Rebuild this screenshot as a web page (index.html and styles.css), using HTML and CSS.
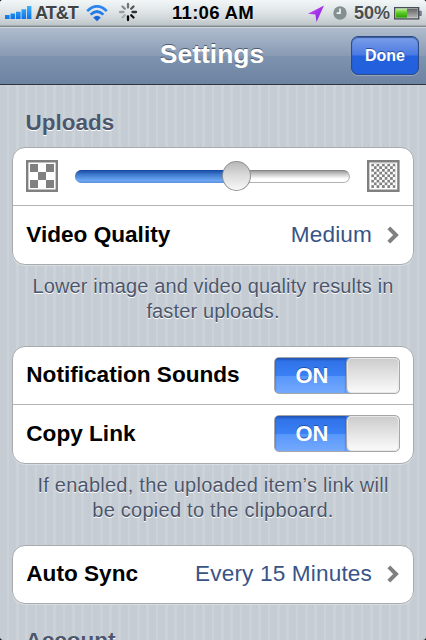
FILE: index.html
```html
<!DOCTYPE html>
<html lang="en">
<head>
<meta charset="utf-8">
<title>Settings</title>
<link rel="stylesheet" href="styles.css">
</head>
<body>
<div class="screen">
  <header class="status">
    <div class="status-left">
      <svg class="signal" width="27" height="14" viewBox="0 0 27 14">
        <defs>
          <linearGradient id="blue" x2="0" y2="1"><stop stop-color="#3db2fb"/><stop offset="1" stop-color="#0a72e8"/></linearGradient>
        </defs>
        <path fill="url(#blue)" d="M0 9h4.6V13H0zM5.5 7.6h4.6V13H5.5zM11 5.8h4.6V13H11zM16.5 3.2h4.6V13h-4.6zM22 0h4.4v13H22z"/>
      </svg>
      <span class="carrier">AT&amp;T</span>
      <svg class="wifi" width="22" height="17" viewBox="0 0 22 17">
        <g fill="none" stroke-width="2.7">
          <path stroke="#2c86ee" d="M1.2 6.1Q11-3.4 20.8 6.1"/>
          <path stroke="#237be9" d="M4.6 9.6Q11 3.3 17.4 9.6"/>
        </g>
        <path fill="#1665dc" d="M7.2 12.4Q11 9.2 14.8 12.4L11 16.2z"/>
      </svg>
      <svg class="spinner" width="20" height="20" viewBox="-10 -10 20 20">
        <g stroke-width="2.3" stroke-linecap="round">
          <path stroke="#707575" d="M0-4.5V-8"/>
          <path stroke="#555" d="M3.2-3.2L5.5-5.5"/>
          <path stroke="#333" d="M4.5 0H8"/>
          <path stroke="#111" d="M3.2 3.2L5.5 5.5"/>
          <path stroke="#000" d="M0 4.5V8"/>
          <path stroke="#a7acac" d="M-3.2 3.2L-5.5 5.5"/>
          <path stroke="#999e9e" d="M-4.5 0H-8"/>
          <path stroke="#858989" d="M-3.2-3.2L-5.5-5.5"/>
        </g>
      </svg>
    </div>
    <span class="time">11:06 AM</span>
    <div class="status-right">
      <svg class="location" width="17" height="17" viewBox="0 0 17 17">
        <defs>
          <linearGradient id="violet" x2="1" y2="1"><stop stop-color="#d04dff"/><stop offset="1" stop-color="#7a1ad6"/></linearGradient>
        </defs>
        <path fill="url(#violet)" d="M16 .5L0 8.8l7.4.7L8.5 17z"/>
      </svg>
      <svg class="alarm" width="14" height="14" viewBox="0 0 14 14">
        <circle cx="7" cy="7" r="6.7" fill="#849090"/>
        <path d="M7 2.5V7.2H3.6" fill="none" stroke="#eef1f2" stroke-width="1.7"/>
      </svg>
      <span class="percent">50%</span>
      <svg class="battery" width="28" height="13" viewBox="0 0 28 13">
        <defs>
          <linearGradient id="green" x2="0" y2="1"><stop stop-color="#bfef94"/><stop offset=".45" stop-color="#58ca20"/><stop offset="1" stop-color="#2c9b09"/></linearGradient>
          <linearGradient id="gray" x2="0" y2="1"><stop stop-color="#666"/><stop offset="1" stop-color="#b5b5b5"/></linearGradient>
        </defs>
        <rect x=".7" y=".7" width="24" height="11.2" fill="#e8ecec" stroke="#404652" stroke-width="1.3"/>
        <path fill="url(#green)" d="M1.8 1.8h11.2v9H1.8z"/>
        <path fill="url(#gray)" d="M13 1.8h10.8v9H13z"/>
        <path fill="#8b91a0" stroke="#505564" stroke-width=".8" d="M25.4 4.2h1.8v4.3h-1.8z"/>
      </svg>
    </div>
  </header>

  <nav class="navbar">
    <h1>Settings</h1>
    <button class="done" type="button">Done</button>
  </nav>

  <main class="content">
    <h2>Uploads</h2>
    <section class="group">
      <div class="row slider-row">
        <svg class="quality" width="32" height="32" viewBox="0 0 32 32">
          <path fill="none" stroke="#808080" stroke-width="2.4" d="M1.2 1.2h29.6v29.6H1.2z"/>
          <path fill="#808080" d="M4 4h8v8H4zM20 4h8v8h-8zM12 12h8v8h-8zM4 20h8v8H4zM20 20h8v8h-8z"/>
        </svg>
        <div class="slider"><div class="fill"></div><div class="knob"></div></div>
        <svg class="quality" width="33" height="32" viewBox="0 0 33 32">
          <defs>
            <pattern id="fine" x="4.2" y="3.6" width="5.4" height="5.4" patternUnits="userSpaceOnUse">
              <path fill="#808080" d="M0 0h2.7v2.7H0zM2.7 2.7h2.7v2.7H2.7z"/>
            </pattern>
          </defs>
          <path fill="none" stroke="#808080" stroke-width="2.4" d="M1.2 1.2h30.2v29.6H1.2z"/>
          <path fill="url(#fine)" d="M4.2 3.6h24.3v24.3H4.2z"/>
        </svg>
      </div>
      <div class="row">
        <span class="label">Video Quality</span>
        <span class="value">Medium</span>
        <svg class="chevron" width="12" height="18" viewBox="0 0 12 18"><path d="M1.8 1.8L9 9l-7.2 7.2" fill="none" stroke="#808080" stroke-width="4"/></svg>
      </div>
    </section>
    <p class="note">Lower image and video quality results in<br>faster uploads.</p>

    <section class="group">
      <div class="row">
        <span class="label">Notification Sounds</span>
        <div class="switch"><span class="on">ON</span><span class="thumb"></span></div>
      </div>
      <div class="row">
        <span class="label">Copy Link</span>
        <div class="switch"><span class="on">ON</span><span class="thumb"></span></div>
      </div>
    </section>
    <p class="note wide">If enabled, the uploaded item’s link will<br>be copied to the clipboard.</p>

    <section class="group">
      <div class="row">
        <span class="label">Auto Sync</span>
        <span class="value">Every 15 Minutes</span>
        <svg class="chevron" width="12" height="18" viewBox="0 0 12 18"><path d="M1.8 1.8L9 9l-7.2 7.2" fill="none" stroke="#808080" stroke-width="4"/></svg>
      </div>
    </section>
    <h2 class="account">Account</h2>
  </main>
</div>
</body>
</html>
```
FILE: styles.css
```css
* { box-sizing: border-box; }

html { background: #000; }

body {
  margin: 0;
  font-family: "Liberation Sans", Arial, sans-serif;
}

.screen {
  display: flex;
  flex-direction: column;
  width: 426px;
  height: 640px;
  overflow: hidden;
  border-radius: 3px;
  background: repeating-linear-gradient(90deg, #c5ccd4 0 6.65px, #cbd2d8 6.65px 9.32px);
}

.status {
  display: grid;
  grid-template-columns: 172px 1fr 118px;
  align-items: center;
  height: 27px;
  flex: none;
  padding-bottom: 1px;
  background: linear-gradient(#f2f6f7, #dce2e4 50%, #bec5c8 94%, #858a8c 95%);
  text-shadow: 0 1px 0 rgba(255, 255, 255, .7);
  font-size: 18.6px;
  font-weight: bold;
}

.status-left, .status-right { display: flex; align-items: center; }
.status-left { padding-left: 5px; }
.signal { margin-right: 3px; }
.carrier { width: 42px; font-size: 18px; letter-spacing: -1px; color: #404344; }
.wifi { margin: 1px 10px 0 9px; }
.spinner { margin-top: -2px; }
.time { letter-spacing: .25px; }
.alarm { margin-left: 8px; }
.percent { width: 37px; margin-left: 7px; font-size: 18px; color: #4a4e50; }
.battery { margin-left: 3px; }

.navbar {
  position: relative;
  display: flex;
  align-items: center;
  justify-content: center;
  height: 58px;
  flex: none;
  border-top: 1px solid #cdd6df;
  border-bottom: 1px solid #2d3642;
  background: linear-gradient(#b0bccd, #889bb3 50%, #7e93ae 50%, #6d83a2);
}

.navbar h1 {
  margin: 0 2px 4px 0;
  color: #fff;
  font-size: 26.5px;
  line-height: 30px;
  text-shadow: 0 -1px 0 #4b5b71;
}

.done {
  position: absolute;
  top: 8px;
  right: 7px;
  width: 68px;
  height: 39px;
  padding: 0;
  border: 1px solid #2b4a86;
  border-radius: 7px;
  background: linear-gradient(#7c9fea, #4a79e2 49%, #2461dd 51%, #2260dd);
  box-shadow: inset 0 1px 1px #365799, 0 1px 0 #93a5be;
  color: #fff;
  font: bold 16px "Liberation Sans", Arial, sans-serif;
  text-shadow: 0 -1px 0 #2c509b;
}

.content { padding: 24px 12px 0; }

h2 {
  margin: 0 0 10.5px 13.5px;
  color: #4c566c;
  font-size: 22.5px;
  line-height: 27px;
  text-shadow: 0 1px 0 #fff;
}

.group {
  border: 1.5px solid #a8abae;
  border-radius: 13px;
  background: #fff;
  box-shadow: 0 1px 0 #d8dde2;
}

.row {
  display: flex;
  align-items: center;
  height: 57.5px;
  padding: 0 14px 0 13.3px;
}

.row + .row {
  height: 58.5px;
  border-top: 1.5px solid #b4b4b4;
}

.slider-row { padding-right: 13px; }

.label { flex: 1; color: #000; font-size: 22.6px; font-weight: bold; }
.value { color: #385487; font-size: 22.6px; letter-spacing: .15px; }
.chevron { margin-left: 15px; }

.quality { flex: none; }

.slider {
  position: relative;
  flex: 1;
  height: 13px;
  margin: 0 17px;
  border: 1px solid #b0b0b0;
  border-top-color: #858585;
  border-radius: 7px;
  background: linear-gradient(#9e9e9e, #dedede 45%, #fff 70%);
}

.fill {
  width: 60%;
  height: 13px;
  margin: -1px 0 0 -1px;
  border-radius: 7px 0 0 7px;
  background: linear-gradient(#1646a0, #3d79cc 35%, #6ca5f1 80%, #5b91dc);
}

.knob {
  position: absolute;
  top: -10px;
  left: 146px;
  width: 29px;
  height: 30px;
  border: 1.5px solid #919191;
  border-radius: 50%;
  background: linear-gradient(#b8b8b8, #dcdcdc 50%, #f8f8f8);
}

.note {
  margin: 9px 0 21px;
  color: #4c566c;
  font-size: 20px;
  letter-spacing: .13px;
  line-height: 25.5px;
  text-align: center;
  text-shadow: 0 1px 0 #fff;
}

.wide { letter-spacing: .25px; }

.switch {
  display: flex;
  width: 126px;
  height: 37px;
  margin-right: -1px;
  overflow: hidden;
  border: 1px solid #a6a6a6;
  border-radius: 5px;
  background: linear-gradient(90deg, transparent 80%, #dedede 80%), linear-gradient(#2e6fe6, #3b81f5 51%, #5796fb 52%, #74aafd);
}

.on {
  width: 71px;
  padding-left: 3px;
  color: #fff;
  font-size: 22px;
  font-weight: bold;
  line-height: 36px;
  text-align: center;
  text-shadow: 0 -1px 0 #1e51ab;
  box-shadow: inset 0 2px 2px #2458b8;
}

.thumb {
  flex: 1;
  border-left: 1px solid #a2a8b2;
  border-radius: 5px;
  background: linear-gradient(#cbcbcb, #e4e4e4 50%, #fbfbfb);
  box-shadow: inset 0 0 0 1px #e8e8e8;
}

.account { margin-top: 23px; }
```
